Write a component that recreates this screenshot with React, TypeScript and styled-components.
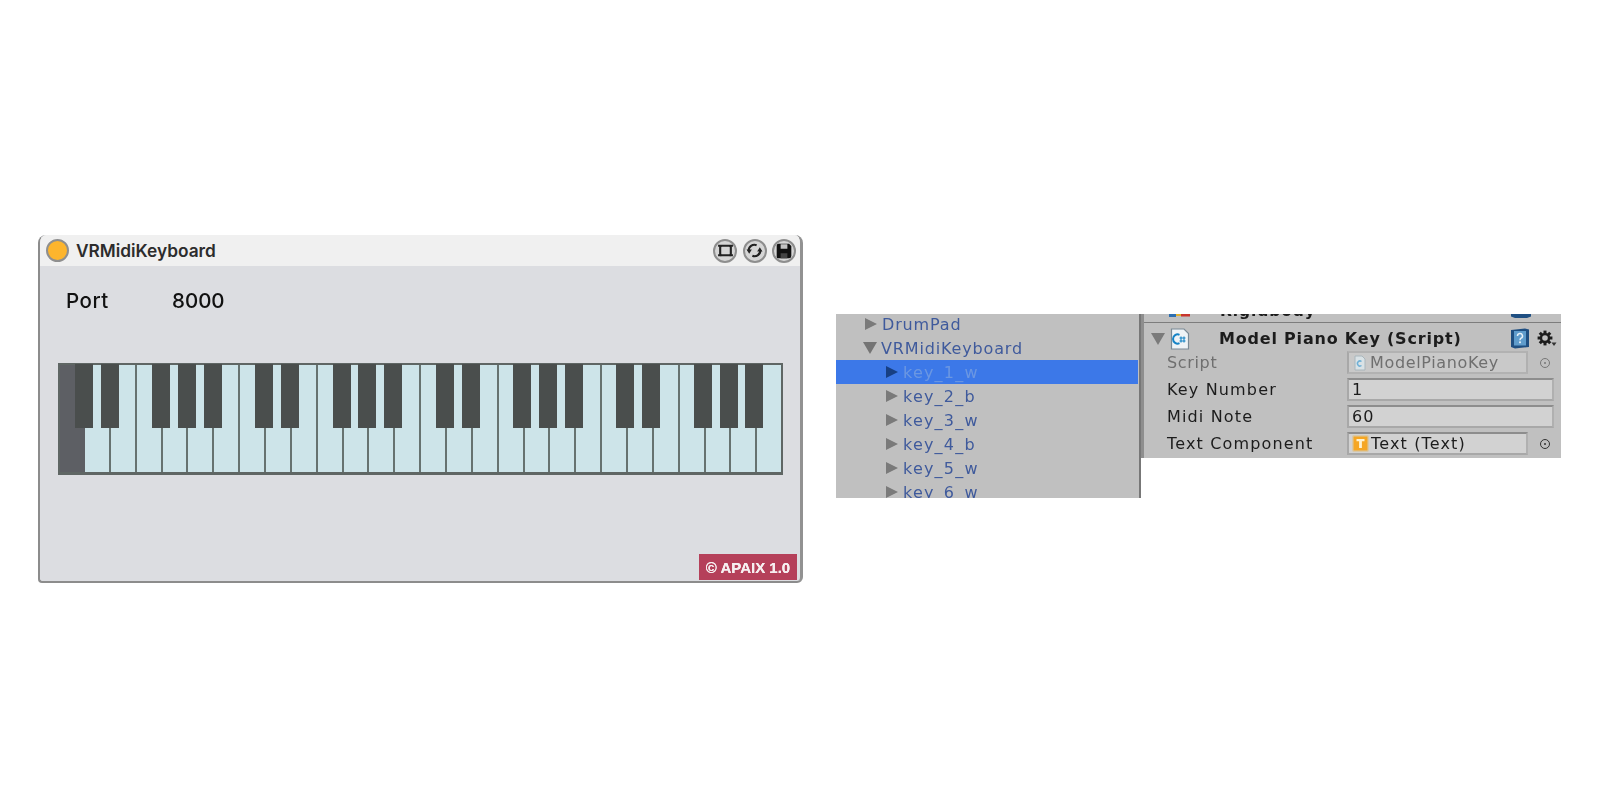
import React from "react";
import styled, { createGlobalStyle } from "styled-components";

const Global = createGlobalStyle`
  html, body { margin: 0; padding: 0; background: #fff; }
  #root { width: 1600px; height: 800px; overflow: hidden; }
`;

const Page = styled.div`
  display: flex;
  align-items: flex-start;
  padding: 235px 0 0 38px;
  gap: 33px;
  box-sizing: border-box;
  width: 1600px;
  height: 800px;
  background: #fff;
`;

const Device = styled.section`
  width: 765px;
  height: 348px;
  box-sizing: border-box;
  display: flex;
  flex-direction: column;
  background: #dcdde1;
  border-left: 2px solid #8c8c8c;
  border-right: 3px solid #929292;
  border-bottom: 2px solid #8c8c8c;
  border-radius: 8px 8px 6px 4px;
  overflow: hidden;
  filter: blur(0.6px);
`;

const TitleBar = styled.header`
  height: 31px;
  flex: none;
  display: flex;
  align-items: center;
  padding: 0 3px 0 6px;
  background: #f0f0f0;
  font: 600 17.3px "Inter", sans-serif;
  color: #2c2c2c;
`;

const Led = styled.span`
  width: 23px;
  height: 23px;
  box-sizing: border-box;
  border-radius: 50%;
  background: #fdb52d;
  border: 2px solid #8f8f8f;
  margin-right: 7px;
`;

const TitleText = styled.span`
  flex: 1;
`;

const RoundButtons = styled.div`
  display: flex;
  gap: 5.5px;
  padding-right: 1px;
`;

const RoundButton = styled.span`
  width: 24px;
  height: 24px;
  box-sizing: border-box;
  border-radius: 50%;
  background: #d6d6d6;
  border: 2px solid #8e8e8e;
  display: flex;
  align-items: center;
  justify-content: center;
`;

const PortRow = styled.div`
  display: flex;
  align-items: center;
  height: 30px;
  margin: 19px 0 0 26px;
  font: 500 20.5px "Inter", sans-serif;
  color: #111;
`;

const PortLabel = styled.span`
  width: 106px;
  letter-spacing: 0.5px;
`;

const Keyboard = styled.div`
  position: relative;
  flex: none;
  width: 725px;
  height: 112px;
  box-sizing: border-box;
  margin: 48px 0 0 18px;
  display: flex;
  padding-left: 25px;
  background: #5d5f64;
  border: 2px solid #5f6664;
  border-bottom-width: 3px;
`;

const WhiteKey = styled.span`
  flex: 1;
  background: #cde4e9;
  border-left: 2px solid #667270;
  &:first-of-type { border-left: none; }
`;

const BlackKey = styled.span`
  position: absolute;
  top: -1px;
  width: 18px;
  height: 64px;
  background: #4a4e4d;
`;

const Footer = styled.div`
  margin: auto 3px 1px auto;
  width: 98px;
  height: 26px;
  display: flex;
  align-items: center;
  justify-content: center;
  background: #b5405a;
  color: #f6eef0;
  font: 700 15px "Liberation Sans", sans-serif;
  text-shadow: 0 0 0.6px #fff;
  white-space: nowrap;
`;

const UnityGroup = styled.section`
  display: flex;
  align-items: flex-start;
  margin-top: 79px;
  filter: blur(0.6px);
`;

const Hierarchy = styled.div`
  width: 305px;
  height: 184px;
  box-sizing: border-box;
  overflow: hidden;
  background: #c0c0c0;
  border-right: 2px solid #777;
  font: 400 16px "DejaVu Sans", sans-serif;
`;

const TreeRow = styled.div<{ $depth: number; $selected?: boolean }>`
  height: 24px;
  display: flex;
  align-items: center;
  padding-left: ${(p) => (p.$depth === 0 ? 28 : 49)}px;
  margin-right: 1px;
  letter-spacing: ${(p) => (p.$depth === 0 ? 0.85 : 1.2)}px;
  background: ${(p) => (p.$selected ? "#3c78e8" : "transparent")};
  color: ${(p) => (p.$selected ? "#6b97e2" : "#3f5a9c")};
  &:first-child { margin-top: -2px; }
`;

const Arrow = styled.span<{ $open?: boolean; $selected?: boolean }>`
  width: 0;
  height: 0;
  flex: none;
  margin-right: 5px;
  ${(p) =>
    p.$open
      ? `border-left: 7px solid transparent; border-right: 7px solid transparent; border-top: 12px solid #747474; margin-left: -1px; margin-right: 4px;`
      : `border-top: 6.5px solid transparent; border-bottom: 6.5px solid transparent; border-left: 12px solid ${p.$selected ? "#173f84" : "#7a7a7a"}; margin-left: 1px;`}
`;

const Inspector = styled.div`
  width: 420px;
  height: 144px;
  box-sizing: border-box;
  overflow: hidden;
  background: #c0c0c0;
  border-left: 3px solid #8e8e8e;
  font: 400 16px "DejaVu Sans", sans-serif;
  color: #1c1c1c;
`;

const ClippedHeader = styled.div`
  height: 8px;
  border-bottom: 1px solid #7d7d7d;
  overflow: hidden;
  display: flex;
  align-items: flex-start;
  padding: 0 30px 0 25px;
  font-weight: 700;
  font-size: 15.5px;
  line-height: 8px;
  letter-spacing: 0.9px;
`;

const ClippedText = styled.span`
  flex: 1;
  transform: translateY(-7px);
  margin-left: 29px;
`;

const ComponentHeader = styled.div`
  height: 21px;
  display: flex;
  align-items: center;
  padding: 5px 0 0 7px;
  font-weight: 700;
  letter-spacing: 0.8px;
`;

const HeaderCaret = styled.span`
  width: 0;
  height: 0;
  margin: 0 5px 0 0;
  border-left: 7px solid transparent;
  border-right: 7px solid transparent;
  border-top: 12px solid #7a7a7a;
`;

const HeaderTitle = styled.span`
  flex: 1;
  margin-left: 29px;
  white-space: nowrap;
`;

const HeaderIcons = styled.span`
  display: flex;
  align-items: center;
  gap: 7px;
  padding-right: 4px;
`;

const PropRow = styled.div<{ $dim?: boolean }>`
  height: 27px;
  display: flex;
  align-items: center;
  padding-left: 23px;
  letter-spacing: ${(p) => (p.$dim ? 0.65 : 1.15)}px;
  color: ${(p) => (p.$dim ? "#6f6f6f" : "#1c1c1c")};
`;

const PropLabel = styled.span`
  width: 180px;
  flex: none;
  white-space: nowrap;
`;

const Field = styled.span<{ $dim?: boolean; $short?: boolean }>`
  width: ${(p) => (p.$short ? 181 : 207)}px;
  height: 23px;
  box-sizing: border-box;
  display: flex;
  align-items: center;
  gap: 2px;
  padding-left: ${(p) => (p.$short ? 3 : 3)}px;
  background: ${(p) => (p.$dim ? "#c9c9c9" : "#d2d2d2")};
  border: 2px solid ${(p) => (p.$dim ? "#b2b2b2" : "#8d8d8d")};
  border-bottom-color: ${(p) => (p.$dim ? "#b2b2b2" : "#a8a8a8")};
  border-left-color: #a8a8a8;
  border-right-color: #b0b0b0;
  white-space: nowrap;
`;

const Picker = styled.span<{ $dim?: boolean }>`
  width: 10px;
  height: 10px;
  margin-left: 12px;
  border-radius: 50%;
  box-sizing: border-box;
  border: 1.5px solid ${(p) => (p.$dim ? "#777" : "#333")};
  display: flex;
  align-items: center;
  justify-content: center;
  &::after {
    content: "";
    width: 2px;
    height: 2px;
    border-radius: 50%;
    background: ${(p) => (p.$dim ? "#777" : "#333")};
  }
`;

const blacks = [84, 110, 161, 187, 213, 264, 290, 342, 367, 393, 445, 471, 522, 548, 574, 625, 651, 703, 729, 754];

const FreezeIcon = () => (
  <svg width="17" height="17" viewBox="0 0 16 16" fill="none" stroke="#222" strokeWidth="2">
    <rect x="3" y="3.5" width="10" height="9" rx="1.5" />
    <path d="M1 3.5h3M12 3.5h3M1 12.5h3M12 12.5h3" />
  </svg>
);

const SyncIcon = () => (
  <svg width="17" height="17" viewBox="0 0 16 16" fill="none" stroke="#222" strokeWidth="2">
    <path d="M2.5 8.5A5.5 5.5 0 0 1 10 3" />
    <path d="M13.5 7.5A5.5 5.5 0 0 1 6 13" />
    <path d="M0.5 7h5L3 11z M10.5 9h5L13 5z" fill="#222" stroke="none" />
  </svg>
);

const SaveIcon = () => (
  <svg width="18" height="18" viewBox="0 0 16 16">
    <path d="M1.5 3A1.5 1.5 0 0 1 3 1.5h9.5L14.5 3.5v9a2 2 0 0 1-2 2H3A1.5 1.5 0 0 1 1.5 13z" fill="#111" />
    <rect x="5" y="2" width="6" height="4" fill="#c4c4c4" />
    <rect x="5" y="10" width="6" height="4.5" fill="#444" />
  </svg>
);

const ScriptFileIcon = () => (
  <svg width="20" height="22" viewBox="0 0 20 22">
    <path d="M1.5 1h12.5l4.5 4.5V21H1.5z" fill="#eef3f6" stroke="#7a8a95" strokeWidth="1.2" />
    <path d="M9.5 6.8a4.6 4.6 0 1 0 0 8.4" fill="none" stroke="#1583c6" strokeWidth="2" />
    <path d="M11 8.5v6M14 8.5v6M9.5 10h6M9.5 13h6" stroke="#1583c6" strokeWidth="1.1" />
  </svg>
);

const BookIcon = () => (
  <svg width="20" height="21" viewBox="0 0 20 21">
    <path d="M1 2l14-1.5 4 1V19l-14 1.5-4-1.5z" fill="#1f4f82" />
    <rect x="4" y="3" width="12" height="14.5" fill="#5f9ccc" />
    <path d="M7.5 8a2.5 2.5 0 1 1 3.6 2.2c-.9.5-1.1 1-1.1 2" fill="none" stroke="#e8f1f8" strokeWidth="1.5" />
    <rect x="9.1" y="13.4" width="1.8" height="1.8" fill="#e8f1f8" />
  </svg>
);

const GearIcon = () => (
  <svg width="20" height="18" viewBox="0 0 20 18">
    <g transform="translate(8 8)" fill="#1d1d1d">
      {[0, 45, 90, 135].map((a) => (
        <rect key={a} x="-1.5" y="-7.4" width="3" height="14.8" transform={`rotate(${a})`} />
      ))}
      <circle r="5.2" />
      <circle r="2.8" fill="#c0c0c0" />
    </g>
    <path d="M14.5 12.5h5l-2.5 3.5z" fill="#333" />
  </svg>
);

const SmallScriptIcon = () => (
  <svg width="16" height="16" viewBox="0 0 16 16" style={{ flex: "none" }}>
    <path d="M3 1h7l3 3v11H3z" fill="#d9e2e6" stroke="#a9b6bc" />
    <path d="M9.5 6.5a2.5 2.5 0 1 0 0 4" fill="none" stroke="#6fb0d6" strokeWidth="1.5" />
  </svg>
);

const TextIcon = () => (
  <svg width="17" height="17" viewBox="0 0 17 17" style={{ flex: "none" }}>
    <rect x="0.8" y="0.8" width="15.4" height="15.4" rx="1" fill="#f5a623" stroke="#d8c8a8" strokeWidth="1.4" />
    <path d="M4.5 4h8v2.2h-2.6V13H7.1V6.2H4.5z" fill="#fff2d0" />
  </svg>
);

const RigidbodyIconStub = () => (
  <svg width="22" height="3" viewBox="0 0 22 3" style={{ flex: "none" }}>
    <rect x="0" y="0" width="7" height="3" fill="#2d6fb0" />
    <rect x="7" y="0" width="5" height="2" fill="#e0b030" />
    <rect x="12" y="0" width="9" height="2.5" fill="#c8352d" />
  </svg>
);

const BookStub = () => (
  <svg width="20" height="4" viewBox="0 0 20 4" style={{ flex: "none" }}>
    <path d="M0 0h20v2.5L16 4H4L0 2.5z" fill="#1f4f82" />
  </svg>
);

const treeKeys = ["key_2_b", "key_3_w", "key_4_b", "key_5_w", "key_6_w"];

export default function App() {
  return (
    <>
      <Global />
      <Page>
        <Device>
          <TitleBar>
            <Led />
            <TitleText>VRMidiKeyboard</TitleText>
            <RoundButtons>
              <RoundButton><FreezeIcon /></RoundButton>
              <RoundButton><SyncIcon /></RoundButton>
              <RoundButton><SaveIcon /></RoundButton>
            </RoundButtons>
          </TitleBar>
          <PortRow>
            <PortLabel>Port</PortLabel>
            <span>8000</span>
          </PortRow>
          <Keyboard>
            {Array.from({ length: 27 }, (_, i) => (
              <WhiteKey key={i} />
            ))}
            {blacks.map((c) => (
              <BlackKey key={c} style={{ left: c - 9 - 60 }} />
            ))}
          </Keyboard>
          <Footer>© APAIX 1.0</Footer>
        </Device>
        <UnityGroup>
          <Hierarchy>
            <TreeRow $depth={0}><Arrow />DrumPad</TreeRow>
            <TreeRow $depth={0}><Arrow $open />VRMidiKeyboard</TreeRow>
            <TreeRow $depth={1} $selected><Arrow $selected />key_1_w</TreeRow>
            {treeKeys.map((k) => (
              <TreeRow $depth={1} key={k}><Arrow />{k}</TreeRow>
            ))}
          </Hierarchy>
          <Inspector>
            <ClippedHeader>
              <RigidbodyIconStub />
              <ClippedText>Rigidbody</ClippedText>
              <BookStub />
            </ClippedHeader>
            <ComponentHeader>
              <HeaderCaret />
              <ScriptFileIcon />
              <HeaderTitle>Model Piano Key (Script)</HeaderTitle>
              <HeaderIcons><BookIcon /><GearIcon /></HeaderIcons>
            </ComponentHeader>
            <PropRow $dim>
              <PropLabel>Script</PropLabel>
              <Field $dim $short><SmallScriptIcon />ModelPianoKey</Field>
              <Picker $dim />
            </PropRow>
            <PropRow>
              <PropLabel>Key Number</PropLabel>
              <Field>1</Field>
            </PropRow>
            <PropRow>
              <PropLabel>Midi Note</PropLabel>
              <Field>60</Field>
            </PropRow>
            <PropRow>
              <PropLabel>Text Component</PropLabel>
              <Field $short><TextIcon />Text (Text)</Field>
              <Picker />
            </PropRow>
          </Inspector>
        </UnityGroup>
      </Page>
    </>
  );
}
